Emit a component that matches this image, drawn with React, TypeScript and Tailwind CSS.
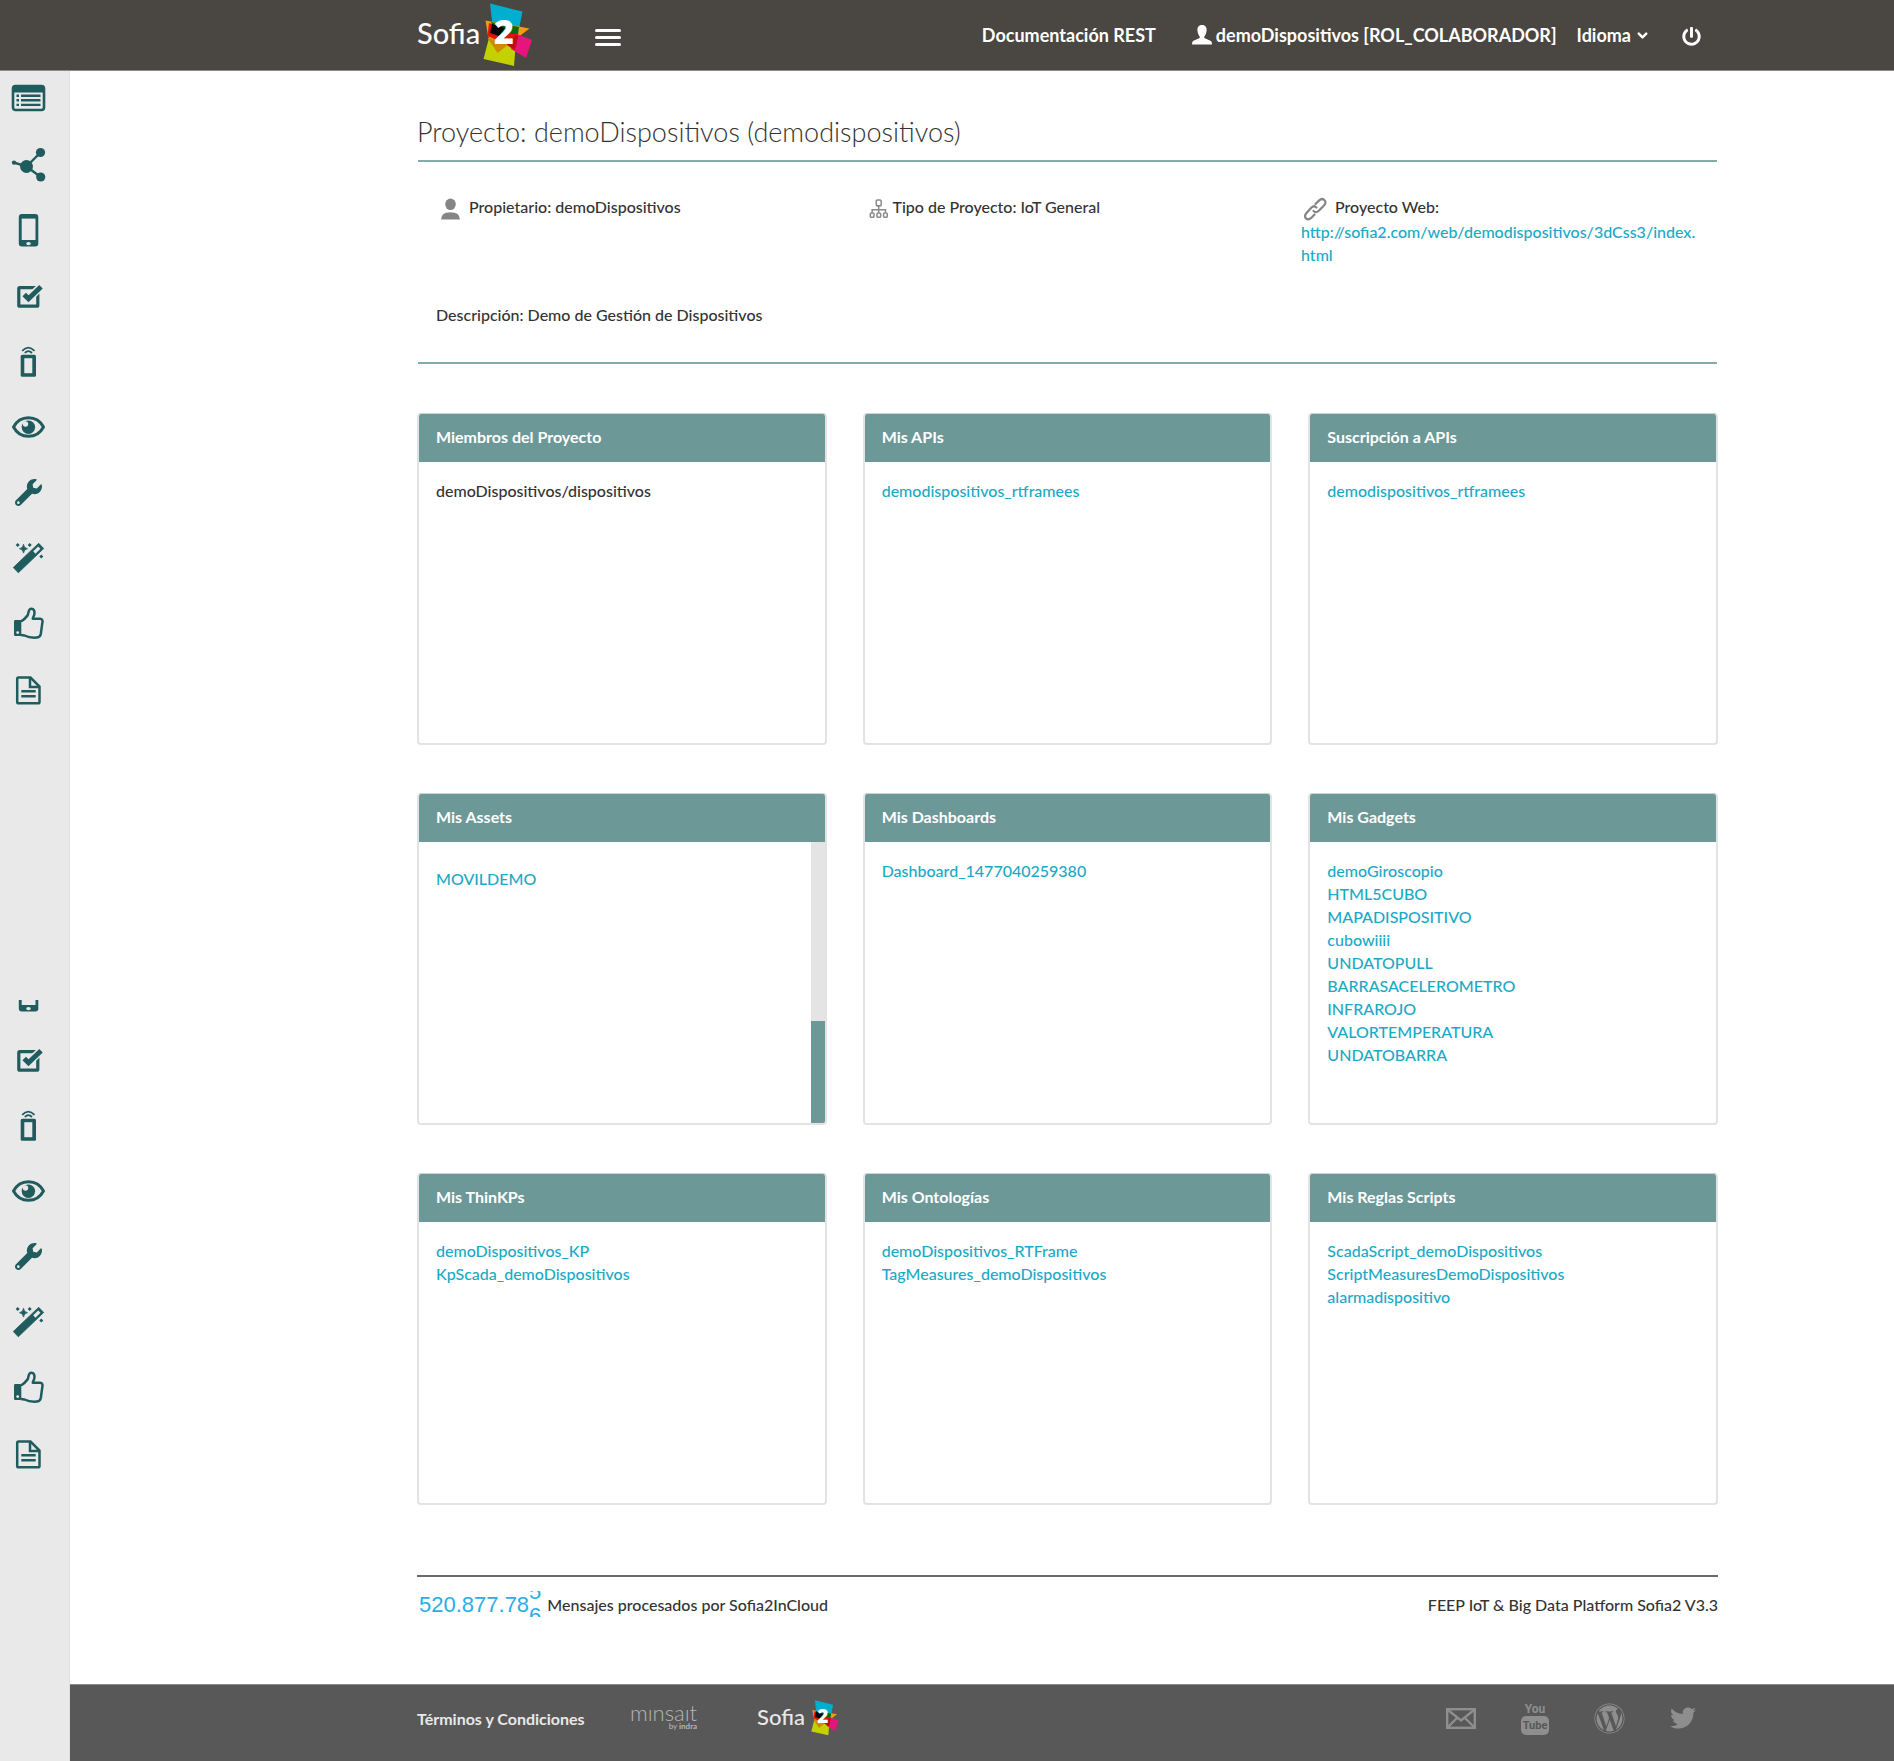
import type { ReactNode } from "react";
import { ChevronDown } from "lucide-react";
import { FaPowerOff, FaTwitter, FaWordpress, FaWrench } from "react-icons/fa";

const TEAL = "#205c5e";
const RAIL = "#e9e9e9";

function Glyph({ children }: { children: ReactNode }) {
  return (
    <svg width="36" height="36" viewBox="0 0 36 36" fill={TEAL} aria-hidden="true" className="shrink-0">
      {children}
    </svg>
  );
}

const ListIcon = () => (
  <Glyph>
    <rect x="3" y="6" width="31" height="24" rx="2.5" fill="none" stroke={TEAL} strokeWidth="2.6" />
    <path d="M3 7.5Q3 6 4.500 6H32.500Q34 6 34 7.500V12.500H3z" />
    <path d="M6.500 15.700H9M6.500 20.300H9M6.500 24.900H9M11 15.700H30.500M11 20.300H30.500M11 24.900H30.500" stroke={TEAL} strokeWidth="2.400" />
  </Glyph>
);
const ShareIcon = () => (
  <Glyph>
    <path d="M3.700 16.500L16.500 20.500L30.500 6.500M16.500 20.500L30.700 31" fill="none" stroke={TEAL} strokeWidth="2.400" />
    <circle cx="16.500" cy="20.500" r="6.500" />
    <circle cx="30.500" cy="6.500" r="4.600" />
    <circle cx="30.700" cy="31" r="4.600" />
    <circle cx="4" cy="16.600" r="2.200" />
  </Glyph>
);
const PhoneIcon = () => (
  <Glyph>
    <rect x="8.800" y="2" width="19.500" height="32.500" rx="3" />
    <rect x="11.700" y="6.600" width="13.800" height="21.400" fill={RAIL} />
    <ellipse cx="18.500" cy="31.600" rx="2.300" ry="1.700" fill={RAIL} />
  </Glyph>
);
const CheckIcon = () => (
  <Glyph>
    <rect x="8.800" y="9.600" width="19" height="18.600" rx="1" fill="none" stroke={TEAL} strokeWidth="3.200" />
    <path d="M14.500 16.500L18.500 20.500L30.800 8.800" fill="none" stroke={RAIL} strokeWidth="8" />
    <path d="M14.200 16.500L18.500 20.800L31 8.800" fill="none" stroke={TEAL} strokeWidth="5" />
  </Glyph>
);
const RemoteIcon = () => (
  <Glyph>
    <rect x="10.700" y="10.800" width="15.300" height="22" rx="1.500" />
    <rect x="14.300" y="14.200" width="8" height="15" fill={RAIL} />
    <path d="M12.200 6.800Q18.300 0.300 24.500 6.800M14.800 9Q18.300 5.300 22 9" fill="none" stroke={TEAL} strokeWidth="1.800" />
  </Glyph>
);
const EyeIcon = () => (
  <Glyph>
    <path d="M3.500 17C10 4.600 27 4.600 33.500 17C27 29.400 10 29.400 3.500 17z" fill="none" stroke={TEAL} strokeWidth="3" strokeLinejoin="round" />
    <circle cx="18.400" cy="17.300" r="6.700" />
    <circle cx="15.500" cy="14" r="2.700" fill={RAIL} />
  </Glyph>
);
const WrenchIcon = () => (
  <span className="flex w-9 shrink-0 justify-center">
    <FaWrench size={27} color={TEAL} />
  </span>
);
const WandIcon = () => (
  <Glyph>
    <path d="M3.300 27.500L8.300 32.800L33.700 8.500L28.700 3.300z" strokeLinejoin="round" stroke={TEAL} strokeWidth="0.800" />
    <path d="M24.300 12.500L29.300 7.600" stroke={RAIL} strokeWidth="3.200" />
    <path d="M13.500 4.300Q13.900 8.300 17.500 8.700Q13.900 9.100 13.500 13.100Q13.100 9.100 9.500 8.700Q13.100 8.300 13.500 4.300z" stroke={TEAL} strokeWidth="0.800" />
    <path d="M7.700 3L9.700 5L7.700 7L5.700 5zM19.700 3L21.700 5L19.700 7L17.700 5zM31.300 14.500L33.300 16.500L31.300 18.500L29.300 16.500z" />
  </Glyph>
);
const ThumbIcon = () => (
  <Glyph>
    <rect x="4" y="15" width="7.300" height="16" rx="1.200" />
    <circle cx="7.700" cy="27.600" r="1.400" fill={RAIL} />
    <path
      d="M11 16C13.500 15.800 16 12 17.500 10.500C18.800 8.500 18 4 21 3.700C24 3.500 25 6.500 24.300 9.500C24 11 22.800 12.500 22.800 13.800H30C32.500 13.800 33 16 32.300 18L30.800 29C30.300 31.500 29 32.500 26.500 32.600C20 33 16.500 31.500 14.500 30.500L11 30"
      fill="none"
      stroke={TEAL}
      strokeWidth="2.500"
      strokeLinejoin="round"
    />
  </Glyph>
);
const FileIcon = () => (
  <Glyph>
    <path d="M8.500 7.500H20.500L29.500 16.500V32Q29.500 33.300 28.200 33.300H8.500Q7.200 33.300 7.200 32V8.800Q7.200 7.500 8.500 7.500z" fill="none" stroke={TEAL} strokeWidth="2.500" />
    <path d="M20 7.500V17H29.500" fill="none" stroke={TEAL} strokeWidth="2.500" />
    <path d="M11.300 21.300H25.700M11.300 26.300H25.700" stroke={TEAL} strokeWidth="2.500" />
  </Glyph>
);

const RailButton = ({ label, tall, children }: { label: string; tall?: boolean; children: ReactNode }) => (
  <button type="button" aria-label={label} className={tall ? "flex h-[66px] w-full items-center pl-2.5" : "flex h-[65px] w-full items-center pl-2.5"}>
    {children}
  </button>
);

function LowerRail() {
  return (
    <>
      <RailButton label="Reglas" tall><CheckIcon /></RailButton>
      <RailButton label="Activos" tall><RemoteIcon /></RailButton>
      <RailButton label="Visualización"><EyeIcon /></RailButton>
      <RailButton label="Herramientas"><WrenchIcon /></RailButton>
      <RailButton label="Asistentes"><WandIcon /></RailButton>
      <RailButton label="Social"><ThumbIcon /></RailButton>
      <RailButton label="Documentos"><FileIcon /></RailButton>
    </>
  );
}

function Mark({ className }: { className: string }) {
  return (
    <svg viewBox="0 0 50 64" className={className} aria-hidden="true">
      <path d="M7 0.500L39.500 8.500L35 31L9.500 22z" fill="#00afcf" />
      <path d="M2.500 17.500L46.500 25.500L34 35L14.500 50L5 33z" fill="#f79a0e" />
      <path d="M6 35L0.500 56L31 63L33 38z" fill="#c3d100" />
      <path d="M4.500 35L31 37L14.500 50z" fill="#d08a00" />
      <path d="M34 31L49 37L43 55L28 46z" fill="#e6157d" />
      <path d="M6 20L35 31L33 45L4.500 33z" fill="#e2130c" />
      <path d="M33 32L35.500 33L31.500 47L24 42z" fill="#c00a1c" />
      <path d="M8 19L36 24L35 31L26 31L14 33z" fill="#046a1a" />
      <path d="M9 21L22 25L16 33L7 30z" fill="#060606" />
      <text x="11" y="41" fontSize="34" fontWeight="800" fill="#fff" className="font-['Open_Sans']">2</text>
    </svg>
  );
}

type CardData = { title: string; items: string[]; plain?: boolean; scroll?: boolean };
const cards: CardData[] = [
  { title: "Miembros del Proyecto", items: ["demoDispositivos/dispositivos"], plain: true },
  { title: "Mis APIs", items: ["demodispositivos_rtframees"] },
  { title: "Suscripción a APIs", items: ["demodispositivos_rtframees"] },
  { title: "Mis Assets", items: ["MOVILDEMO"], scroll: true },
  { title: "Mis Dashboards", items: ["Dashboard_1477040259380"] },
  {
    title: "Mis Gadgets",
    items: ["demoGiroscopio", "HTML5CUBO", "MAPADISPOSITIVO", "cubowiiii", "UNDATOPULL", "BARRASACELEROMETRO", "INFRAROJO", "VALORTEMPERATURA", "UNDATOBARRA"],
  },
  { title: "Mis ThinKPs", items: ["demoDispositivos_KP", "KpScada_demoDispositivos"] },
  { title: "Mis Ontologías", items: ["demoDispositivos_RTFrame", "TagMeasures_demoDispositivos"] },
  { title: "Mis Reglas Scripts", items: ["ScadaScript_demoDispositivos", "ScriptMeasuresDemoDispositivos", "alarmadispositivo"] },
];

function Card({ title, items, plain, scroll }: CardData) {
  return (
    <section className="flex min-h-[332px] flex-col overflow-hidden rounded-[4px] border-2 border-t border-[#e3e3e3] border-t-[#c9d6d6]">
      <h2 className="-mx-px flex h-12 shrink-0 items-center bg-[#6d9898] px-[18px] pb-1 font-bold text-white">{title}</h2>
      <div className="flex grow justify-between">
        <ul className={scroll ? "px-[17px] pt-[25px]" : "px-[17px] pt-[17px]"}>
          {items.map((item) => (
            <li key={item}>{plain ? item : <a href="#" className="text-[#1aa9c6]">{item}</a>}</li>
          ))}
        </ul>
        {scroll && (
          <div className="flex w-3.5 flex-col justify-end bg-[#e4e4e4]">
            <div className="h-[102px] bg-[#6d9898]" />
          </div>
        )}
      </div>
    </section>
  );
}

export default function App() {
  return (
    <div className="flex min-h-screen flex-col bg-white font-['Lato','Open_Sans',sans-serif] text-[16px] leading-[23px] font-medium text-[#333]">
      <header className="flex h-[71px] items-center justify-between border-b border-[#8f8c88] bg-[#4a4641] pr-[193px] pl-[417px] text-white">
        <div className="flex items-center">
          <a href="#" aria-label="Sofia 2" className="flex items-center">
            <span className="w-[66px] pb-1 text-[29px] leading-8">Sofia</span>
            <Mark className="h-16 w-[50px]" />
          </a>
          <button type="button" aria-label="Menú" className="mt-1 ml-[62px] flex w-[26px] flex-col gap-1">
            <span className="h-[3px] rounded-sm bg-white" />
            <span className="h-[3px] rounded-sm bg-white" />
            <span className="h-[3px] rounded-sm bg-white" />
          </button>
        </div>
        <nav className="flex items-center text-[18px] font-bold whitespace-nowrap">
          <a href="#">Documentación REST</a>
          <a href="#" className="ml-9 flex items-center gap-1">
            <svg width="20" height="20" viewBox="0 0 20 20" fill="currentColor" aria-hidden="true">
              <path d="M10 0C13.500 0 15 2.500 14.500 6C14.200 9 13 10.500 12.300 11.500V13L19 16Q20 16.500 20 19.500H0Q0 16.500 1 16L7.700 13V11.500C7 10.500 5.800 9 5.500 6C5 2.500 6.500 0 10 0z" />
            </svg>
            demoDispositivos [ROL_COLABORADOR]
          </a>
          <button type="button" className="ml-5 flex items-center gap-1">
            Idioma <ChevronDown size={15} strokeWidth={4} />
          </button>
          <button type="button" aria-label="Salir" className="ml-8 pt-0.5">
            <FaPowerOff size={19} />
          </button>
        </nav>
      </header>

      <div className="flex grow">
        <aside className="w-[70px] shrink-0 border-r border-[#dedede] bg-[#e9e9e9]">
          <div className="-mt-1.5">
            <RailButton label="Panel" tall><ListIcon /></RailButton>
            <RailButton label="Ontologías" tall><ShareIcon /></RailButton>
            <RailButton label="Dispositivos" tall><PhoneIcon /></RailButton>
            <LowerRail />
          </div>
          <div className="mt-[280px]">
            <button type="button" aria-label="Dispositivos" className="flex h-[13px] w-full items-end overflow-hidden pl-2.5">
              <PhoneIcon />
            </button>
            <div className="pt-3.5">
              <LowerRail />
            </div>
          </div>
        </aside>

        <div className="flex min-w-0 grow flex-col">
          <main className="grow pt-[43px] pr-[176px] pl-[347px]">
            <h1 className="flex h-[46px] items-start text-[27px] leading-9 font-light">Proyecto: demoDispositivos (demodispositivos)</h1>

            <div className="mx-px h-[204px] border-y-2 border-[#84abab] pt-[33px] pr-2.5 pl-[18px]">
              <div className="grid h-[108px] grid-cols-[1fr_1fr_406px]">
                <div className="flex items-start gap-2 pl-1">
                  <svg width="21" height="26" viewBox="0 0 20 24" fill="#858585" aria-hidden="true">
                    <ellipse cx="10" cy="8.500" rx="5" ry="5.500" />
                    <path d="M1 23Q1 16 10 16Q19 16 19 23z" />
                  </svg>
                  Propietario: demoDispositivos
                </div>
                <div className="flex items-start gap-1">
                  <svg width="20" height="25" viewBox="0 0 18 23" fill="none" stroke="#8a8a8a" strokeWidth="1.400" aria-hidden="true">
                    <rect x="6.500" y="4.500" width="4.500" height="5.500" rx="1" />
                    <path d="M8.700 10V16M2.700 16V13.500H15V16" />
                    <rect x="1" y="16.500" width="3.400" height="4" rx="1" />
                    <rect x="7.100" y="16.500" width="3.400" height="4" rx="1" />
                    <rect x="13.200" y="16.500" width="3.400" height="4" rx="1" />
                  </svg>
                  Tipo de Proyecto: IoT General
                </div>
                <div>
                  <div className="flex h-[25px] items-start gap-2 pl-0.5">
                    <svg width="24" height="27" viewBox="0 0 24 24" fill="none" stroke="#858585" strokeWidth="2.200" strokeLinecap="round" aria-hidden="true">
                      <path d="M10.500 14.500C12 16 14 16 15.500 14.500L21 9C23 7 22.800 4.800 21.300 3.500C19.800 2.200 17.800 2.300 16.200 3.900L12.500 7.500" />
                      <path d="M13.500 11C12 9.500 10 9.500 8.500 11L3.500 16.500C1.700 18.500 1.700 20.500 3 21.900C4.500 23.300 6.500 23 8.200 21.400L11.500 18" />
                    </svg>
                    Proyecto Web:
                  </div>
                  <a href="#" className="block text-[#1aa9c6]">http://sofia2.com/web/demodispositivos/3dCss3/index.<wbr />html</a>
                </div>
              </div>
              <p>Descripción: Demo de Gestión de Dispositivos</p>
            </div>

            <div className="mt-[49px] grid grid-cols-3 gap-x-9 gap-y-12">
              {cards.map((c) => (
                <Card key={c.title} {...c} />
              ))}
            </div>

            <div className="mt-[70px] flex items-center justify-between border-t-2 border-[#666b68] pt-3.5">
              <div className="flex items-center gap-1.5">
                <span className="flex h-[26px] items-center overflow-hidden pl-0.5 font-['Liberation_Sans',sans-serif] text-[22px] font-normal text-[#27aee4]">
                  520.877.78
                  <span className="flex h-[26px] flex-col justify-center overflow-hidden leading-6">
                    <span>5</span>
                    <span>6</span>
                  </span>
                </span>
                Mensajes procesados por Sofia2InCloud
              </div>
              <span>FEEP IoT &amp; Big Data Platform Sofia2 V3.3</span>
            </div>
          </main>

          <footer className="flex h-[77px] items-center justify-between border-t border-[#8a8a8a] bg-[#585858] pr-[198px] pb-2.5 pl-[347px] text-[#e8e8e8]">
            <div className="flex items-center">
              <a href="#" className="w-[213px] font-bold">Términos y Condiciones</a>
              <a href="#" className="flex w-[127px] flex-col items-start text-[#b5b5b5]">
                <span className="flex flex-col items-end">
                  <span className="text-[22px] leading-4 font-light">mınsaıt</span>
                  <span className="text-[8px] leading-2.5">by <b>indra</b></span>
                </span>
              </a>
              <a href="#" aria-label="Sofia 2" className="flex items-center">
                <span className="w-[54px] pb-1 text-[22px]">Sofia</span>
                <Mark className="h-9 w-7" />
              </a>
            </div>
            <div className="flex items-center text-[#8e8e8e]">
              <a href="#" aria-label="Correo">
                <svg width="30" height="21" viewBox="0 0 30 21" fill="none" stroke="currentColor" strokeWidth="2.4" aria-hidden="true">
                  <rect x="1.200" y="1.200" width="27.600" height="18.600" />
                  <path d="M2 2L15 12.500L28 2M2 19L11 10M28 19L19 10" />
                </svg>
              </a>
              <a href="#" aria-label="YouTube" className="ml-[45px] flex w-7 flex-col items-center font-['Roboto',sans-serif] font-bold">
                <span className="text-[12px] leading-3.5">You</span>
                <span className="flex h-[19px] w-7 items-center justify-center rounded-[5px] bg-[#8e8e8e] text-[11px] text-[#585858]">Tube</span>
              </a>
              <a href="#" aria-label="WordPress" className="ml-[45px]"><FaWordpress size={31} /></a>
              <a href="#" aria-label="Twitter" className="ml-[45px]"><FaTwitter size={26} /></a>
            </div>
          </footer>
        </div>
      </div>
    </div>
  );
}
